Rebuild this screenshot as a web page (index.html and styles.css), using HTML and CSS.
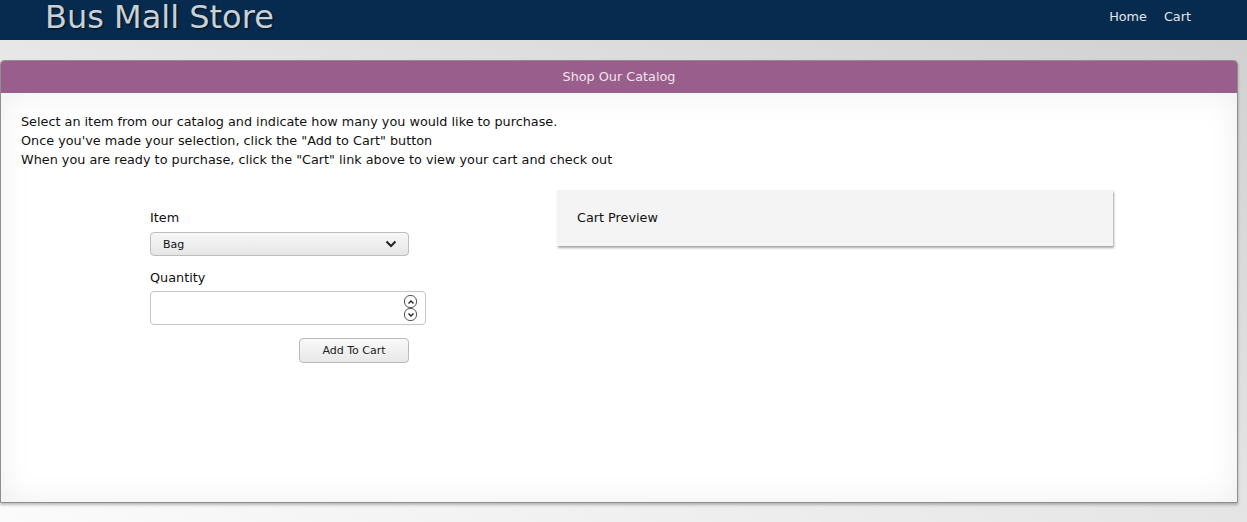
FILE: index.html
```html
<!DOCTYPE html>
<html lang="en">
<head>
<meta charset="utf-8">
<title>Bus Mall Store</title>
<link rel="stylesheet" href="styles.css">
</head>
<body>
<header class="site-header">
  <h1 class="site-title">Bus Mall Store</h1>
  <nav class="site-nav">
    <a href="#" class="nav-link">Home</a>
    <a href="#" class="nav-link">Cart</a>
  </nav>
</header>
<main class="card">
  <div class="card-header">Shop Our Catalog</div>
  <div class="card-body">
    <p class="intro">Select an item from our catalog and indicate how many you would like to purchase.<br>Once you've made your selection, click the "Add to Cart" button<br>When you are ready to purchase, click the "Cart" link above to view your cart and check out</p>
    <div class="shop-row">
      <div class="form-col">
        <form class="order-form">
          <label class="field-label" for="items">Item</label>
          <div class="select-wrap">
            <select id="items" class="item-select">
              <option>Bag</option>
            </select>
            <svg class="select-chevron" width="12" height="8" viewBox="0 0 12 8"><path d="M1.5 1.5 L6 6 L10.5 1.5" fill="none" stroke="#222" stroke-width="2"/></svg>
          </div>
          <label class="field-label qty-label" for="quantity">Quantity</label>
          <div class="number-wrap">
            <input id="quantity" class="qty-input" type="number">
            <div class="spinner">
              <span class="spin-btn"><svg width="8" height="6" viewBox="0 0 8 6"><path d="M1.5 4.5 L4 2 L6.5 4.5" fill="none" stroke="#222" stroke-width="1.4"/></svg></span>
              <span class="spin-btn"><svg width="8" height="6" viewBox="0 0 8 6"><path d="M1.5 1.5 L4 4 L6.5 1.5" fill="none" stroke="#222" stroke-width="1.4"/></svg></span>
            </div>
          </div>
          <div class="btn-row">
            <button type="button" class="add-btn">Add To Cart</button>
          </div>
        </form>
      </div>
      <section class="cart-preview">Cart Preview</section>
    </div>
  </div>
</main>
</body>
</html>
```

FILE: styles.css
```css
* { box-sizing: border-box; }
html { min-height: 100%; background: linear-gradient(to top right, #fbfbfb, #cfcfcf); }
body {
  margin: 0;
  min-height: 522px;
  font-family: "DejaVu Sans", sans-serif;
  font-size: 12.8px;
  color: #111;
}
.site-header {
  height: 40px;
  background: #072b4e;
  display: flex;
  align-items: flex-start;
  justify-content: space-between;
  padding: 0 56px 0 45px;
}
.site-title {
  margin: 0;
  font-size: 32px;
  font-weight: normal;
  line-height: 34px;
  color: #c8d0d8;
  text-shadow: 1px 1px 2px rgba(0,0,0,0.7);
}
.site-nav {
  display: flex;
  gap: 17px;
  line-height: 34px;
}
.nav-link {
  color: #e4e6ea;
  text-decoration: none;
  font-size: 12.8px;
}
.card {
  display: block;
  margin: 20px 9px 0 0;
  border: 1px solid #8e8e8e;
  border-radius: 4px 4px 0 0;
  background: #fff;
  box-shadow: 0 2px 3px rgba(0,0,0,0.25);
  overflow: hidden;
}
.card-header {
  height: 32px;
  line-height: 32px;
  text-align: center;
  background: #9a5e8c;
  color: #eee4ec;
  font-size: 12.8px;
}
.card-body {
  height: 409px;
  padding: 19px 20px 20px;
  box-shadow: inset 0 0 32px rgba(0,0,0,0.07);
}
.intro {
  margin: 0;
  line-height: 19px;
}
.shop-row {
  display: flex;
  margin-top: 21px;
}
.form-col {
  width: 536px;
  padding: 20px 0 0 129px;
}
.order-form {
  width: 259px;
}
.field-label {
  display: block;
  margin-bottom: 7px;
}
.qty-label {
  margin-bottom: 6px;
}
.select-wrap {
  position: relative;
  margin-bottom: 14px;
}
.item-select {
  display: block;
  width: 100%;
  height: 24px;
  appearance: none;
  -webkit-appearance: none;
  border: 1px solid #bdbdbd;
  border-radius: 4px;
  background: linear-gradient(#f7f7f7, #e6e6e6);
  font-family: "DejaVu Sans", sans-serif;
  font-size: 11px;
  color: #111;
  padding: 0 0 0 12px;
}
.select-chevron {
  position: absolute;
  right: 12px;
  top: 8px;
  pointer-events: none;
}
.number-wrap {
  position: relative;
  width: 276px;
  margin-bottom: 13px;
}
.qty-input {
  display: block;
  width: 100%;
  height: 34px;
  border: 1px solid #c4c4c4;
  border-radius: 4px;
  background: #fff;
  -moz-appearance: textfield;
  appearance: textfield;
  font-family: "DejaVu Sans", sans-serif;
  font-size: 13px;
  padding: 0 8px;
}
.qty-input::-webkit-inner-spin-button,
.qty-input::-webkit-outer-spin-button { -webkit-appearance: none; margin: 0; }
.spinner {
  position: absolute;
  right: 9px;
  top: 4px;
  display: flex;
  flex-direction: column;
}
.spin-btn {
  width: 13px;
  height: 13px;
  border: 1px solid #555;
  border-radius: 6px;
  background: #fff;
  display: flex;
  align-items: center;
  justify-content: center;
}
.btn-row {
  display: flex;
  justify-content: flex-end;
}
.add-btn {
  width: 110px;
  height: 25px;
  border: 1px solid #bcbcbc;
  border-radius: 4px;
  background: linear-gradient(#f9f9f9, #e8e8e8);
  font-family: "DejaVu Sans", sans-serif;
  font-size: 11px;
  color: #222;
  padding: 0;
}
.cart-preview {
  width: 556px;
  height: 56px;
  padding: 0 20px;
  line-height: 56px;
  background: #f4f4f4;
  box-shadow: 1px 2px 2px rgba(0,0,0,0.35);
}
```
